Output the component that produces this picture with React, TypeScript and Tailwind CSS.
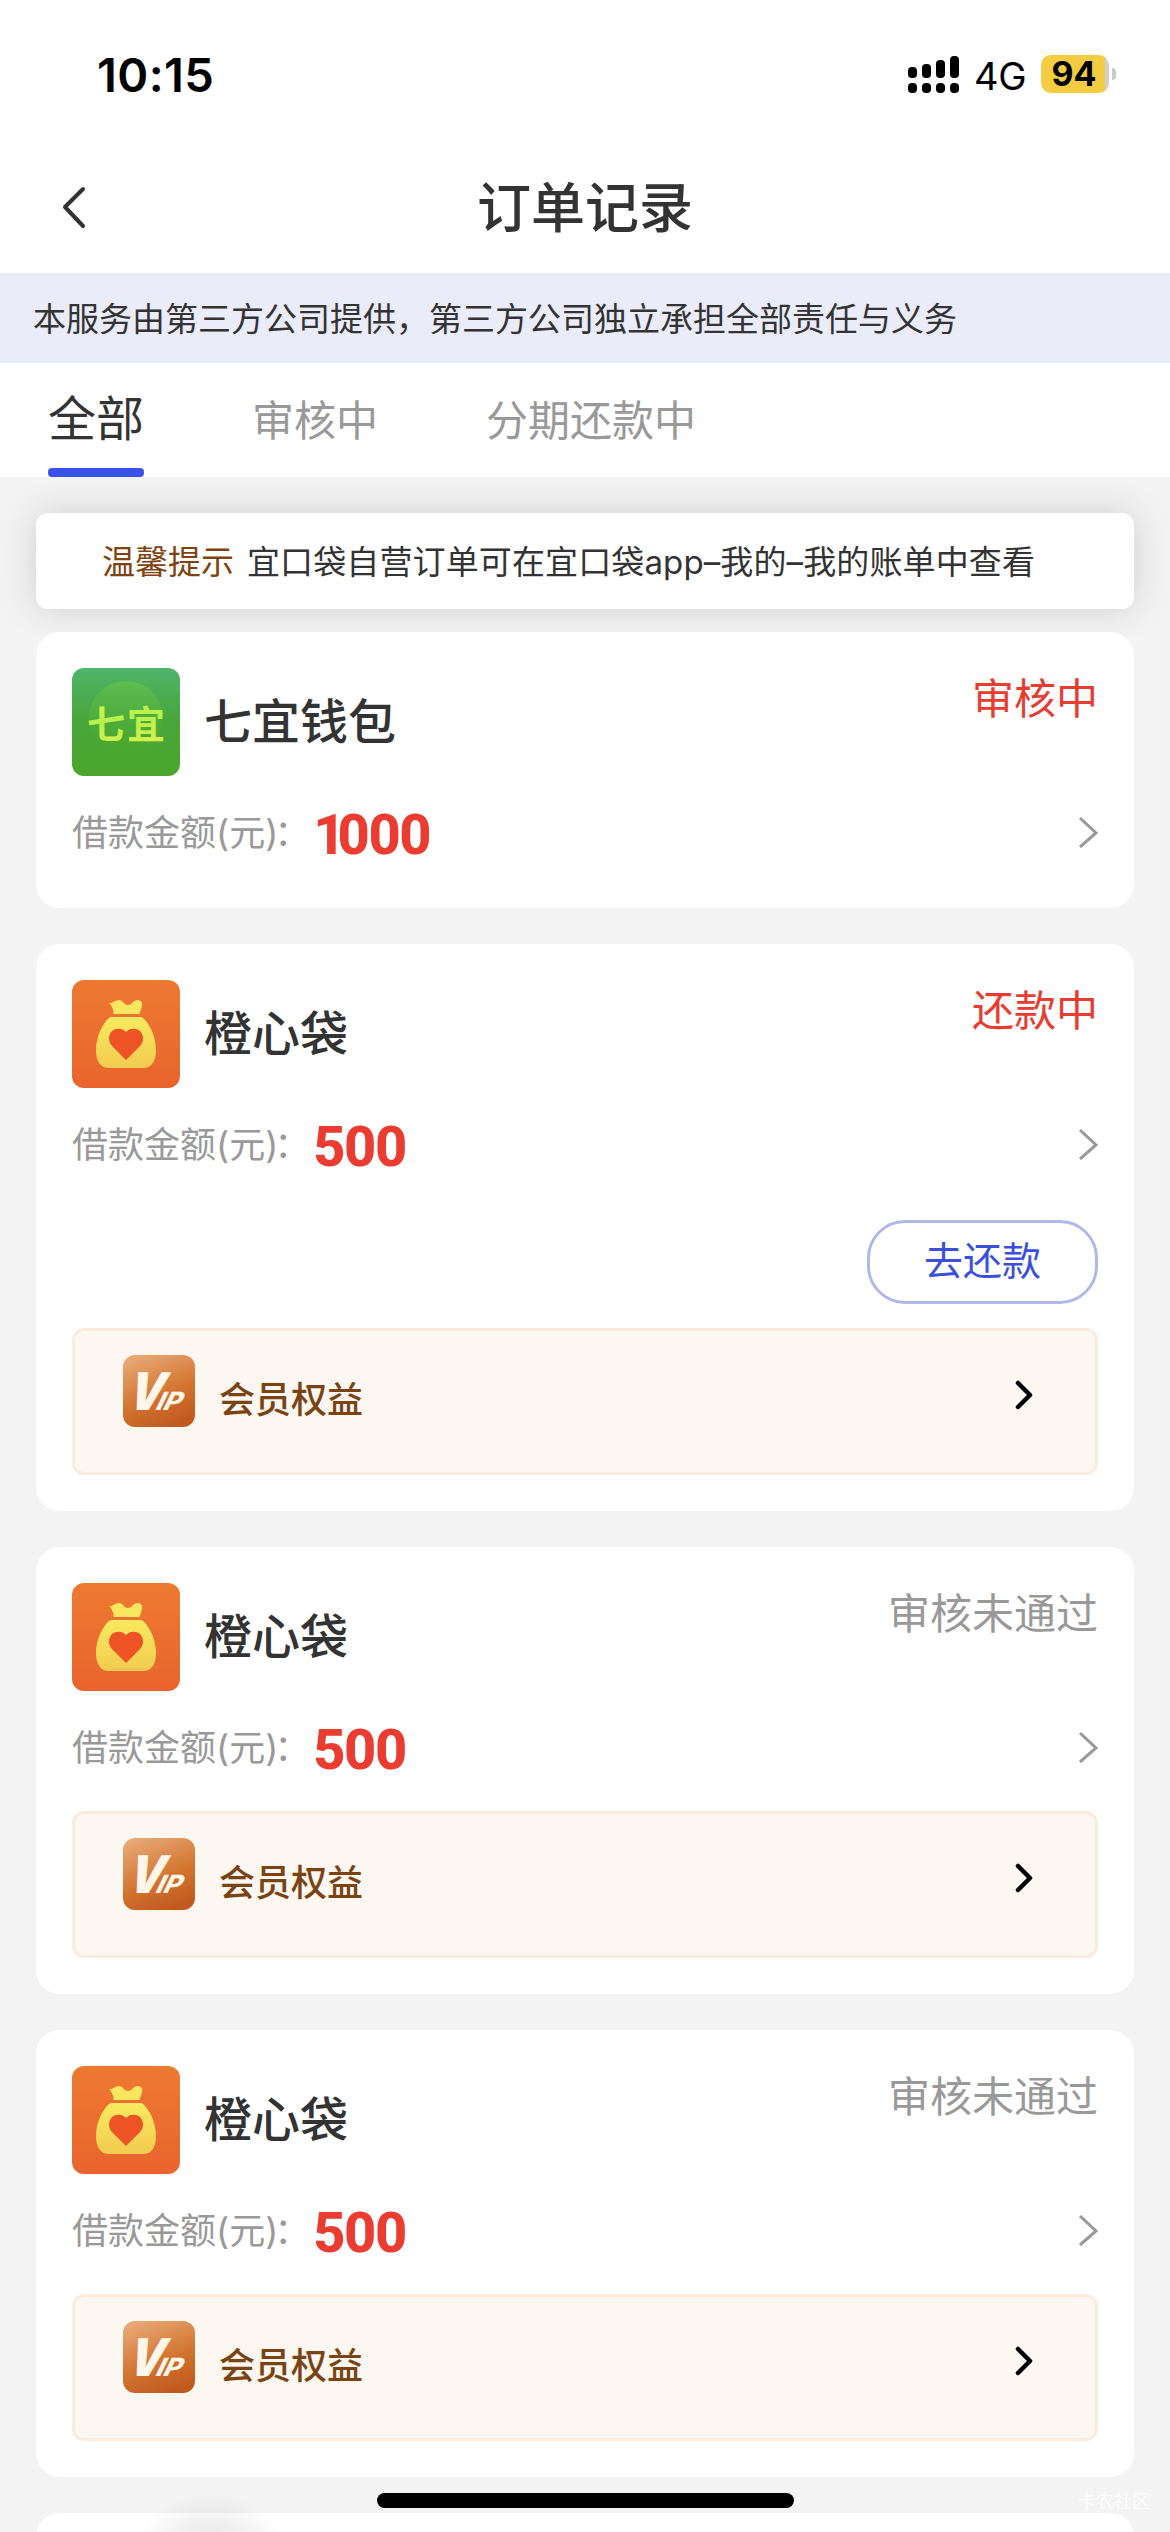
import type { ReactElement } from 'react';

interface Order {
  id: number;
  name: string;
  brand: 'qiyi' | 'orange';
  amount: number;
  status: string;
  active: boolean;
  canRepay?: boolean;
  hasVip?: boolean;
}

const orders: Order[] = [
  { id: 1, name: '七宜钱包', brand: 'qiyi', amount: 1000, status: '审核中', active: true },
  { id: 2, name: '橙心袋', brand: 'orange', amount: 500, status: '还款中', active: true, canRepay: true, hasVip: true },
  { id: 3, name: '橙心袋', brand: 'orange', amount: 500, status: '审核未通过', active: false, hasVip: true },
  { id: 4, name: '橙心袋', brand: 'orange', amount: 500, status: '审核未通过', active: false, hasVip: true },
];

const tabs = ['全部', '审核中', '分期还款中'];

function SignalIcon() {
  return (
    <svg width="52" height="38" viewBox="0 0 52 38">
      <rect x="0" y="12" width="9" height="11" rx="4" />
      <rect x="14" y="9" width="9" height="14" rx="4" />
      <rect x="28" y="5" width="9" height="18" rx="4" />
      <rect x="42" y="1" width="9" height="22" rx="4" />
      <rect x="0" y="28" width="9" height="10" rx="4" />
      <rect x="14" y="28" width="9" height="10" rx="4" />
      <rect x="28" y="28" width="9" height="10" rx="4" />
      <rect x="42" y="28" width="9" height="10" rx="4" />
    </svg>
  );
}

function StatusBar() {
  return (
    <div className="flex h-[147px] shrink-0 items-center justify-between pl-[97px] pr-[54px] text-black">
      <span className="pt-[3px] text-[47px] font-semibold leading-[54px] tracking-[0.4px]">10:15</span>
      <div className="flex items-center">
        <SignalIcon />
        <span className="ml-[14px] pt-[4px] text-[38px] leading-[44px] tracking-[-0.5px]">4G</span>
        <div className="ml-[15px] flex h-[38px] w-[68px] items-center justify-center rounded-[10px] bg-linear-to-r from-[#f3cc41] from-94% to-[#cfcfcf] to-94% pr-[2px]">
          <span className="text-[34px] font-bold leading-[38px]">94</span>
        </div>
        <div className="ml-[3px] h-[12px] w-[4px] rounded-r-full bg-[#c9c9c9]" />
      </div>
    </div>
  );
}

function QiyiLogo() {
  return (
    <svg width="108" height="108" viewBox="0 0 108 108" className="rounded-[12px]">
      <defs>
        <linearGradient id="qiyi-bg" x1="0" y1="0" x2="0" y2="1">
          <stop offset="0" stopColor="#50b46c" />
          <stop offset="0.45" stopColor="#48a73c" />
          <stop offset="1" stopColor="#4ca62c" />
        </linearGradient>
        <linearGradient id="qiyi-disc" x1="0" y1="0" x2="0" y2="1">
          <stop offset="0" stopColor="#5cbd50" />
          <stop offset="0.8" stopColor="#4caa2e" stopOpacity="0.4" />
          <stop offset="1" stopColor="#4caa2e" stopOpacity="0" />
        </linearGradient>
        <linearGradient id="qiyi-text" x1="0" y1="0" x2="0.2" y2="1">
          <stop offset="0" stopColor="#f2ee55" />
          <stop offset="0.5" stopColor="#b5f24c" />
          <stop offset="1" stopColor="#d6f04c" />
        </linearGradient>
      </defs>
      <rect width="108" height="108" fill="url(#qiyi-bg)" />
      <circle cx="54" cy="50" r="37" fill="url(#qiyi-disc)" />
      <text
        x="15"
        y="70"
        fontFamily="'Noto Sans CJK SC', sans-serif"
        fontWeight="700"
        fontSize="38"
        letterSpacing="2"
        fill="url(#qiyi-text)"
      >
        七宜
      </text>
    </svg>
  );
}

function OrangeLogo() {
  return (
    <svg width="108" height="108" viewBox="0 0 108 108" className="rounded-[12px]">
      <defs>
        <linearGradient id="orange-bg" x1="0" y1="0" x2="0" y2="1">
          <stop offset="0" stopColor="#ed7a31" />
          <stop offset="1" stopColor="#e9642d" />
        </linearGradient>
        <linearGradient id="orange-bag" x1="0" y1="0" x2="0" y2="1">
          <stop offset="0" stopColor="#f8ea60" />
          <stop offset="1" stopColor="#f2cb50" />
        </linearGradient>
      </defs>
      <rect width="108" height="108" fill="url(#orange-bg)" />
      <path
        d="M37.500 23 C41 23.500 43 20 47 20 C51 20 52 25 56 25 C60 25 61 20 66 20 C70 20 71 24 69.500 28 C68.500 31 68 32 67.500 34 H41.500 C42 30 40 27 37.500 23 Z"
        fill="#f8e65e"
      />
      <path
        d="M39 37 H69 C72 38 74 41 76 44 C81 51 84 61 84 70 C84 82 79 88 71 88 H37 C29 88 24 82 24 70 C24 61 27 51 32 44 C34 41 36 38 39 37 Z"
        fill="url(#orange-bag)"
      />
      <path
        d="M54 80 L40 66 C36 62 36 55 40 51 C44 47.500 51 48 54 52 C57 48 64 47.500 68 51 C72 55 72 62 68 66 Z"
        fill="#ee5325"
      />
    </svg>
  );
}

function VipLogo() {
  return (
    <svg width="72" height="72" viewBox="0 0 72 72" className="overflow-visible">
      <defs>
        <linearGradient id="vip-bg" x1="0.2" y1="0" x2="0.6" y2="1">
          <stop offset="0" stopColor="#e8a976" />
          <stop offset="0.6" stopColor="#d2742f" />
          <stop offset="1" stopColor="#c25a20" />
        </linearGradient>
      </defs>
      <rect width="72" height="72" rx="12" fill="url(#vip-bg)" />
      <g fill="#fff6ea" fontFamily="Inter, sans-serif">
        <text transform="translate(2 55) skewX(-18)" fontSize="52" fontWeight="900" textLength="35" lengthAdjust="spacingAndGlyphs">
          V
        </text>
        <text transform="translate(31 55) skewX(-26)" fontSize="25" fontWeight="800" textLength="25" lengthAdjust="spacingAndGlyphs">
          IP
        </text>
      </g>
    </svg>
  );
}

function VipEntry() {
  return (
    <div className="flex h-[147px] items-start rounded-[12px] border-[3px] border-[#fbebdf] bg-[#fcf8f1] pl-12 pr-[62px] pt-6">
      <VipLogo />
      <span className="ml-6 mt-[18px] text-[36px] font-medium leading-[54px] text-[#7a4314]">会员权益</span>
      <svg width="18" height="30" viewBox="0 0 18 30" className="ml-auto mt-[25px]" fill="none">
        <path d="M3 3 L15 15 L3 27" stroke="#000" strokeWidth="4.500" strokeLinecap="round" strokeLinejoin="round" />
      </svg>
    </div>
  );
}

function Amount({ value }: { value: number }) {
  return (
    <span className="ml-[3px] pt-[5px] font-[Roboto] text-[56px] font-extrabold leading-[64px] tracking-[-1.500px] text-[#eb3c31]">
      {String(value)
        .split('')
        .map((digit, i) => (
          <span key={i} className={digit === '1' ? 'tracking-[-8px]' : ''}>
            {digit}
          </span>
        ))}
    </span>
  );
}

const logos: Record<Order['brand'], ReactElement> = {
  qiyi: <QiyiLogo />,
  orange: <OrangeLogo />,
};

function OrderCard({ order }: { order: Order }) {
  return (
    <div className="relative shrink-0 rounded-[24px] bg-white p-9">
      <div className="flex h-[108px] items-start">
        {logos[order.brand]}
        <h2 className="ml-6 mt-[18px] text-[48px] font-medium leading-[72px] text-[#333333]">{order.name}</h2>
        <span
          className={
            order.active
              ? 'ml-auto mt-px text-[42px] leading-[60px] text-[#e93b30]'
              : 'ml-auto mt-px text-[42px] leading-[60px] text-[#999999]'
          }
        >
          {order.status}
        </span>
      </div>
      <div className="mt-6 flex h-16 items-center">
        <span className="pt-[2px] text-[36px] leading-[54px] text-[#999999]">
          借款金额(元)<span className="-ml-[4px]">：</span>
        </span>
        <Amount value={order.amount} />
        <svg width="20" height="32" viewBox="0 0 20 32" className="ml-auto" fill="none">
          <path d="M2 2 L18 17 L2 31" stroke="#999" strokeWidth="3" />
        </svg>
      </div>
      {order.canRepay && (
        <div className="mt-11 flex justify-end">
          <button className="h-[84px] w-[231px] rounded-[38px] border-[3px] border-[#b0b8ea] pb-[2px] text-[39px] text-[#3a50dc]">
            去还款
          </button>
        </div>
      )}
      {order.hasVip ? (
        <div className={order.canRepay ? 'mt-6' : 'mt-8'}>
          <VipEntry />
        </div>
      ) : (
        <div className="h-2" />
      )}
    </div>
  );
}

export default function App() {
  return (
    <div className="relative flex h-[2532px] w-[1170px] flex-col overflow-hidden bg-[#f3f3f3] font-[Inter,'Noto_Sans_CJK_SC',sans-serif] text-[#333333]">
      <div className="shrink-0 bg-white">
        <StatusBar />
        <header className="grid h-[126px] grid-cols-[1fr_auto_1fr] items-center pl-[60px] pr-[60px]">
          <svg width="28" height="44" viewBox="0 0 28 44" fill="none" className="-mt-[6px]">
            <path d="M23 4 L5 22 L23 41" stroke="#333" strokeWidth="4" strokeLinecap="round" strokeLinejoin="round" />
          </svg>
          <h1 className="-mt-[3px] text-[54px] font-medium leading-[80px]">订单记录</h1>
        </header>
      </div>

      <div className="flex h-[90px] shrink-0 items-center bg-[#eaecf9] pl-[33px] pt-[3px] text-[33px]">
        本服务由第三方公司提供，第三方公司独立承担全部责任与义务
      </div>

      <nav className="flex h-[114px] shrink-0 gap-[108px] bg-white pl-12">
        {tabs.map((tab, i) =>
          i === 0 ? (
            <div key={tab} className="flex flex-col justify-between pt-[21px]">
              <span className="text-[48px] leading-[70px]">{tab}</span>
              <div className="h-[9px] rounded-[4px] bg-[#3a52e8]" />
            </div>
          ) : (
            <span key={tab} className="pt-[27px] text-[42px] leading-[62px] text-[#999999]">
              {tab}
            </span>
          ),
        )}
      </nav>

      <main className="flex min-h-0 flex-1 flex-col overflow-hidden px-9 pt-9">
        <div className="flex h-24 shrink-0 items-center rounded-[12px] bg-white pl-[66px] pt-[3px] text-[33px] shadow-[0_0_36px_rgba(0,0,0,0.15)]">
          <span className="text-[#7f4312]">温馨提示</span>
          <span className="ml-[13px] tracking-[0.12px]">宜口袋自营订单可在宜口袋app–我的–我的账单中查看</span>
        </div>
        <div className="mt-[23px] flex flex-col gap-9">
          {orders.map((order) => (
            <OrderCard key={order.id} order={order} />
          ))}
          <div className="h-[120px] shrink-0 rounded-[24px] bg-white" />
        </div>
      </main>

      {/* soft shadow of the floating entry below the fold */}
      <div className="absolute left-[130px] top-[2494px] h-[140px] w-[160px] bg-[radial-gradient(closest-side,rgba(0,0,0,0.14),transparent)]" />
      <div className="absolute left-[377px] top-[2493px] h-[15px] w-[417px] rounded-full bg-black" />
      <span className="absolute right-[20px] top-[2488px] text-[18px] leading-[28px] text-white/80">卡农社区</span>
    </div>
  );
}
